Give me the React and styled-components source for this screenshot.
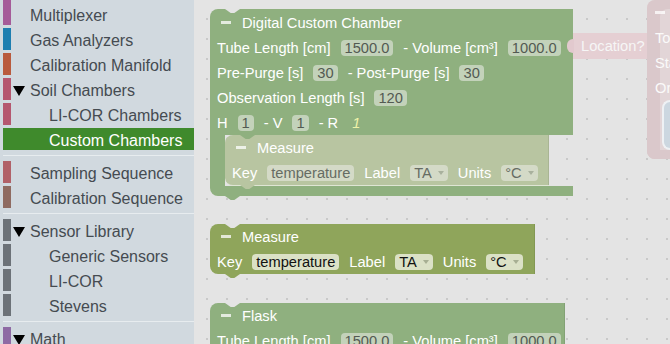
import React from 'react'
import styled, { createGlobalStyle } from 'styled-components'

const GlobalStyle = createGlobalStyle`
  html, body {
    margin: 0;
    padding: 0;
  }
  body {
    font-family: "Liberation Sans", Arial, sans-serif;
    overflow: hidden;
  }
`

const GREEN = { bg: '#8fb07f', field: '#c3d2ba', ink: '#535a52', caret: 'rgba(80,90,75,0.4)' }
const OLIVE = { bg: '#8fa55b', field: '#dbe1c6', ink: '#111', caret: 'rgba(90,100,70,0.4)' }
const SHADOW = { bg: '#b8c5a1', field: '#d4dac7', ink: '#666c63', caret: 'rgba(90,100,80,0.35)' }
const CANVAS = '#e4e4e4'

const Page = styled.div`
  display: flex;
  width: 670px;
  height: 344px;
  overflow: hidden;
`

const Toolbox = styled.nav`
  display: flex;
  flex-direction: column;
  width: 194px;
  flex-shrink: 0;
  background: #d1d9df;
  overflow: hidden;
`

const Category = styled.div`
  display: flex;
  align-items: center;
  flex-shrink: 0;
  box-sizing: border-box;
  height: ${p => (p.$first ? 25 : 22)}px;
  padding-top: ${p => (p.$first ? 6 : 3)}px;
  margin: ${p => (p.$first ? 0 : 3)}px 0 0 3px;
  padding-left: ${p => p.$level * 19 + 2}px;
  border-left: 8px solid ${p => (p.$selected ? '#3f8a2c' : p.$color)};
  background: ${p => (p.$selected ? '#3f8a2c' : 'transparent')};
  color: ${p => (p.$selected ? '#fff' : '#454b51')};
  font-size: 16px;
  white-space: nowrap;
`

const Toggle = styled.span`
  width: 0;
  height: 0;
  flex-shrink: 0;
  border-left: 6px solid transparent;
  border-right: 6px solid transparent;
  border-top: 10px solid ${p => (p.$open ? '#000' : 'transparent')};
  margin-right: 5px;
`

const Divider = styled.div`
  flex-shrink: 0;
  height: 1px;
  margin: 5px 0 2px 3px;
  background: #e7ecef;
`

const Workspace = styled.main`
  position: relative;
  flex: 1;
  overflow: hidden;
  background-color: ${CANVAS};
  background-image: radial-gradient(circle, #c9c9c9 0.8px, transparent 1.2px);
  background-size: 20px 20px;
  background-position: 3px 9px;
`

const Placed = styled.div`
  position: absolute;
  left: ${p => p.$x}px;
  top: ${p => p.$y}px;
`

const connectors = `
  &::before,
  &::after {
    content: '';
    position: absolute;
    left: 15px;
    width: 15px;
    height: 4px;
    clip-path: polygon(0 0, 100% 0, 62% 100%, 38% 100%);
  }
  &::before {
    top: 0;
  }
  &::after {
    top: 100%;
  }
`

const Shape = styled.div`
  position: relative;
  width: ${p => p.$w}px;
  background: ${p => p.$tone.bg};
  border-radius: 8px 0 0 8px;
  border-bottom: ${p => (p.$lit ? '1px solid rgba(255,255,255,0.55)' : 'none')};
  box-shadow: inset -1px 0 0 rgba(0, 0, 0, 0.08);
  color: #fff;
  font-size: 14.67px;
  ${connectors}
  &::before {
    background: ${p => p.$notch};
  }
  &::after {
    background: ${p => p.$tone.bg};
  }
`

const Chamber = styled.div`
  position: relative;
  width: ${p => p.$w}px;
  color: #fff;
  font-size: 14.67px;
  ${connectors}
  &::before {
    background: ${CANVAS};
    z-index: 1;
  }
  &::after {
    background: ${p => p.$tone.bg};
  }
`

const ChamberTop = styled.div`
  background: ${p => p.$tone.bg};
  border-radius: 8px 0 0 0;
  padding-top: 1px;
`

const Statement = styled.div`
  display: flex;
`

const Arm = styled.div`
  width: 15px;
  background: ${p => p.$tone.bg};
`

const ChamberBottom = styled.div`
  height: 10px;
  background: ${p => p.$tone.bg};
  border-radius: 0 0 0 8px;
`

const Header = styled.div`
  display: flex;
  align-items: center;
  gap: 11px;
  height: 25px;
  padding-left: 11px;
  white-space: nowrap;
`

const Collapse = styled.span`
  width: 10px;
  height: 3px;
  background: rgba(255, 255, 255, 0.75);
`

const Row = styled.div`
  display: flex;
  align-items: center;
  gap: 10px;
  height: 25px;
  padding-left: 7px;
  white-space: nowrap;
`

const Field = styled.span`
  display: inline-flex;
  align-items: center;
  gap: 6px;
  height: 16px;
  line-height: 16px;
  padding: 0 4px;
  border-radius: 4px;
  background: ${p => p.$tone.field};
  color: ${p => p.$tone.ink};
`

const Caret = styled.span`
  width: 0;
  height: 0;
  border-left: 3.5px solid transparent;
  border-right: 3.5px solid transparent;
  border-top: 4px solid ${p => p.$tone.caret};
`

const Constant = styled.span`
  margin-left: 4px;
  font-style: italic;
  color: #eef2a8;
`

const Reporter = styled.div`
  position: relative;
  width: 78px;
  height: 26px;
  box-sizing: border-box;
  padding-left: 8px;
  display: flex;
  align-items: center;
  background: #e5cfd3;
  color: #f6f6f6;
  font-size: 14.67px;
  &::before {
    content: '';
    position: absolute;
    left: -6px;
    top: 6px;
    width: 7px;
    height: 14px;
    border-radius: 6px 0 0 6px;
    background: #e2c9ce;
  }
`

const Procedure = styled.div`
  width: 40px;
  height: 159px;
  box-sizing: border-box;
  padding-left: 8px;
  border-radius: 8px;
  background: #e2d5d7;
  box-shadow: inset 13px 9px 0 #dac8cb, inset 0 -9px 0 #dac8cb;
  color: #fafafa;
  font-size: 14.67px;
  overflow: hidden;
`

const ProcLine = styled.div`
  display: flex;
  align-items: center;
  height: 25px;
  white-space: nowrap;
`

const Slot = styled.div`
  width: 40px;
  height: 50px;
  box-sizing: border-box;
  margin-left: 7px;
  border: 2px solid #eef1f4;
  border-right: none;
  border-radius: 8px 0 0 8px;
  background: #ccd7e0;
`

const categories = [
  { label: 'Multiplexer', color: '#a55b99', level: 0, first: true },
  { label: 'Gas Analyzers', color: '#1d7eb0', level: 0 },
  { label: 'Calibration Manifold', color: '#b95a3d', level: 0 },
  { label: 'Soil Chambers', color: '#b5576f', level: 0, open: true },
  { label: 'LI-COR Chambers', color: '#b5576f', level: 1 },
  { label: 'Custom Chambers', color: '#b5576f', level: 1, selected: true },
  'divider',
  { label: 'Sampling Sequence', color: '#b16168', level: 0 },
  { label: 'Calibration Sequence', color: '#8f6b61', level: 0 },
  'divider',
  { label: 'Sensor Library', color: '#6c7278', level: 0, open: true },
  { label: 'Generic Sensors', color: '#6c7278', level: 1 },
  { label: 'LI-COR', color: '#6c7278', level: 1 },
  { label: 'Stevens', color: '#6c7278', level: 1 },
  'divider',
  { label: 'Math', color: '#8e6aa4', level: 0, open: true },
]

const Dropdown = ({ tone, children }) => (
  <Field $tone={tone}>
    {children}
    <Caret $tone={tone} />
  </Field>
)

const MeasureRow = ({ tone }) => (
  <Row>
    Key <Field $tone={tone}>temperature</Field>
    Label <Dropdown tone={tone}>TA</Dropdown>
    Units <Dropdown tone={tone}>°C</Dropdown>
  </Row>
)

const TubeRow = ({ tone }) => (
  <Row>
    Tube Length [cm] <Field $tone={tone}>1500.0</Field>
    - Volume [cm³] <Field $tone={tone}>1000.0</Field>
  </Row>
)

export default function App() {
  return (
    <Page>
      <GlobalStyle />
      <Toolbox>
        {categories.map((c, i) =>
          c === 'divider' ? (
            <Divider key={i} />
          ) : (
            <Category
              key={i}
              $color={c.color}
              $level={c.level}
              $selected={c.selected}
              $first={c.first}
            >
              <Toggle $open={c.open} />
              {c.label}
            </Category>
          )
        )}
      </Toolbox>

      <Workspace>
        <Placed $x={16} $y={9}>
          <Chamber $w={363} $tone={GREEN}>
            <ChamberTop $tone={GREEN}>
              <Header>
                <Collapse />
                Digital Custom Chamber
              </Header>
              <TubeRow tone={GREEN} />
              <Row>
                Pre-Purge [s] <Field $tone={GREEN}>30</Field>
                - Post-Purge [s] <Field $tone={GREEN}>30</Field>
              </Row>
              <Row>
                Observation Length [s] <Field $tone={GREEN}>120</Field>
              </Row>
              <Row>
                H <Field $tone={GREEN}>1</Field>
                - V <Field $tone={GREEN}>1</Field>
                - R <Constant>1</Constant>
              </Row>
            </ChamberTop>
            <Statement>
              <Arm $tone={GREEN} />
              <Shape $w={324} $tone={SHADOW} $notch={GREEN.bg} $lit>
                <Header>
                  <Collapse />
                  Measure
                </Header>
                <MeasureRow tone={SHADOW} />
              </Shape>
            </Statement>
            <ChamberBottom $tone={GREEN} />
          </Chamber>
        </Placed>

        <Placed $x={379} $y={33}>
          <Reporter>Location?</Reporter>
        </Placed>

        <Placed $x={453} $y={0}>
          <Procedure>
            <ProcLine>
              <Collapse />
            </ProcLine>
            <ProcLine>To</ProcLine>
            <ProcLine>Sta</ProcLine>
            <ProcLine>Or</ProcLine>
            <Slot />
          </Procedure>
        </Placed>

        <Placed $x={16} $y={224}>
          <Shape $w={325} $tone={OLIVE} $notch={CANVAS}>
            <Header>
              <Collapse />
              Measure
            </Header>
            <MeasureRow tone={OLIVE} />
          </Shape>
        </Placed>

        <Placed $x={16} $y={303}>
          <Shape $w={355} $tone={GREEN} $notch={CANVAS}>
            <Header>
              <Collapse />
              Flask
            </Header>
            <TubeRow tone={GREEN} />
          </Shape>
        </Placed>
      </Workspace>
    </Page>
  )
}
